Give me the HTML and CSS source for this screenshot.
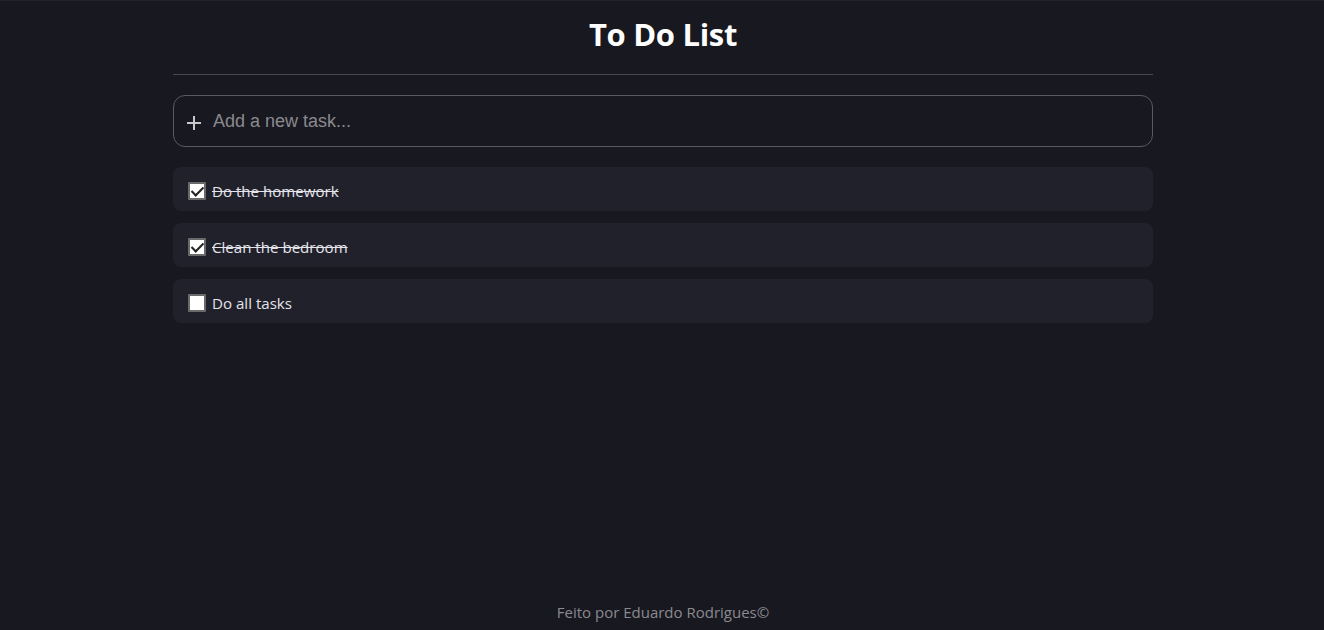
FILE: index.html
```html
<!DOCTYPE html>
<html lang="en">
<head>
<meta charset="utf-8">
<title>To Do List</title>
<link rel="stylesheet" href="styles.css">
</head>
<body>
<div class="page">
  <main class="container">
    <h1 class="title">To Do List</h1>
    <hr class="divider">
    <label class="new-task">
      <svg class="plus" width="16" height="16" viewBox="0 0 16 16"><path d="M8 1v14M1 8h14" stroke="#c8c8c8" stroke-width="2" fill="none"/></svg>
      <input class="new-input" type="text" placeholder="Add a new task...">
    </label>
    <ul class="tasks">
      <li class="task done"><input class="check" type="checkbox" checked><span class="label">Do the homework</span></li>
      <li class="task done"><input class="check" type="checkbox" checked><span class="label">Clean the bedroom</span></li>
      <li class="task"><input class="check" type="checkbox"><span class="label">Do all tasks</span></li>
    </ul>
  </main>
  <footer class="footer">Feito por Eduardo Rodrigues©</footer>
</div>
</body>
</html>
```
FILE: styles.css
```css
* { box-sizing: border-box; }
html, body { margin: 0; height: 100%; }
body {
  background: #181820;
  color: #fff;
  font-family: "Open Sans", "Noto Sans", sans-serif;
}
.page {
  min-height: 100vh;
  display: flex;
  flex-direction: column;
  border-top: 1px solid #23232c;
  padding-left: 2px;
}
.container {
  width: 980px;
  margin: 0 auto;
  flex: 1;
}
.title {
  margin: 0;
  padding-top: 13px;
  height: 56px;
  text-align: center;
  font-size: 31px;
  font-weight: 700;
  line-height: 40px;
  letter-spacing: -0.3px;
}
.divider {
  margin: 17px 0 0;
  border: 0;
  border-top: 1px solid #4a4a4e;
}
.new-task {
  margin-top: 20px;
  height: 52px;
  border: 1px solid #5a5a5e;
  border-radius: 12px;
  display: flex;
  align-items: center;
  padding: 0 12px;
  gap: 11px;
}
.plus { flex: none; margin-top: 3px; }
.new-input {
  flex: 1;
  background: transparent;
  border: 0;
  outline: none;
  color: #ddd;
  font-family: "Liberation Sans", Arial, sans-serif;
  font-size: 18px;
  padding: 0;
}
.new-input::placeholder { color: #8a8a8e; }
.tasks {
  list-style: none;
  margin: 20px 0 0;
  padding: 0;
  display: flex;
  flex-direction: column;
  gap: 12px;
}
.task {
  height: 44px;
  background: #21212c;
  border-radius: 8px;
  display: flex;
  align-items: center;
  padding: 4px 14px 0 15px;
  font-size: 15.1px;
  color: #e4e4ea;
}
.check {
  width: 18px;
  height: 18px;
  margin: 0 6px 0 0;
  appearance: none;
  -webkit-appearance: none;
  background: #fff;
  border: 2px solid #6a6a6a;
  border-radius: 1px;
  position: relative;
}
.check:checked::after {
  content: "";
  position: absolute;
  left: 4px;
  top: 0px;
  width: 5px;
  height: 10px;
  border: solid #222;
  border-width: 0 2.5px 2.5px 0;
  transform: rotate(45deg);
}
.done .label { text-decoration: line-through; }
.footer {
  text-align: center;
  color: #8a8a90;
  font-size: 15px;
  padding-bottom: 8px;
}
```
